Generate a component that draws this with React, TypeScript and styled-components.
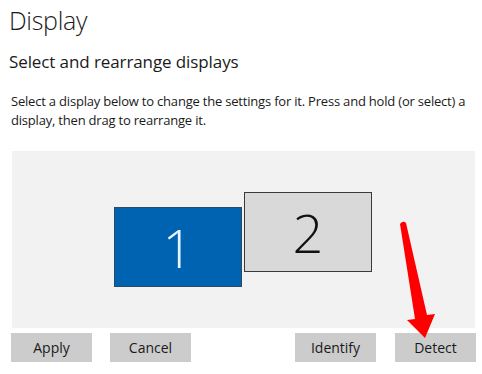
import React from 'react';
import styled, { createGlobalStyle } from 'styled-components';

const GlobalStyle = createGlobalStyle`
  html, body {
    margin: 0;
    padding: 0;
    background: #ffffff;
    font-family: "Open Sans", "Noto Sans", sans-serif;
    color: #1a1a1a;
  }
`;

const Page = styled.div`
  position: relative;
  width: 482px;
  height: 374px;
  overflow: hidden;
  padding: 3px 0 0 9px;
  box-sizing: border-box;
`;

const Title = styled.h1`
  margin: 0;
  font-size: 25px;
  font-weight: 300;
  line-height: 34px;
  letter-spacing: -0.3px;
`;

const SubTitle = styled.h2`
  margin: 13px 0 0 0;
  font-size: 17px;
  font-weight: 400;
  line-height: 24px;
  letter-spacing: -0.1px;
`;

const Description = styled.p`
  margin: 18px 0 0 2px;
  font-size: 13px;
  line-height: 19px;
  letter-spacing: -0.2px;
  width: 472px;
`;

const Arrangement = styled.div`
  position: relative;
  margin: 21px 0 0 3px;
  width: 463px;
  height: 177px;
  background: #f2f2f2;
`;

const Monitor = styled.div<{ $active?: boolean }>`
  position: absolute;
  width: 128px;
  height: 80px;
  box-sizing: border-box;
  border: 1.5px solid ${p => (p.$active ? '#2b4a66' : '#3a3a3a')};
  background: ${p => (p.$active ? '#0063b1' : '#d9d9d9')};
  color: ${p => (p.$active ? '#e8f4ff' : '#111111')};
  display: flex;
  align-items: center;
  justify-content: center;
  font-size: 54px;
  font-weight: 300;
`;

const ButtonRow = styled.div`
  display: flex;
  margin: 5px 0 0 2px;
  gap: 18px;
`;

const Button = styled.button`
  width: 81px;
  height: 29px;
  border: none;
  background: #cccccc;
  font-family: inherit;
  font-size: 14px;
  color: #1a1a1a;
  padding: 0;
`;

const Right = styled.div`
  display: flex;
  gap: 19px;
  margin-left: auto;
  margin-right: 6px;
`;

const Arrow = styled.svg`
  position: absolute;
  left: 395px;
  top: 218px;
`;

export default function App() {
  return (
    <Page>
      <GlobalStyle />
      <Title>Display</Title>
      <SubTitle>Select and rearrange displays</SubTitle>
      <Description>
        Select a display below to change the settings for it. Press and hold (or select) a
        display, then drag to rearrange it.
      </Description>
      <Arrangement>
        <Monitor $active style={{ left: 102, top: 56 }}>1</Monitor>
        <Monitor style={{ left: 232, top: 41 }}>2</Monitor>
      </Arrangement>
      <ButtonRow>
        <Button>Apply</Button>
        <Button>Cancel</Button>
        <Right>
          <Button>Identify</Button>
          <Button>Detect</Button>
        </Right>
      </ButtonRow>
      <Arrow width="50" height="125" viewBox="0 0 50 125">
        <path
          d="M5 6 Q8 2 11 5 L32 97 L40 96 L30 120 L12 102 L20 101 Z"
          fill="#ff0000"
        />
      </Arrow>
    </Page>
  );
}
